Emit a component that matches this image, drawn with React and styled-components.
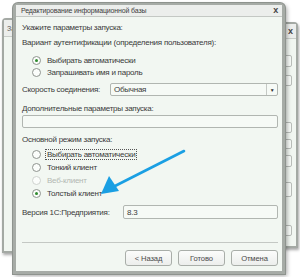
import React from "react";
import styled, { createGlobalStyle } from "styled-components";

const GlobalStyle = createGlobalStyle`
  html, body {
    margin: 0;
    padding: 0;
    background: #ffffff;
  }
  body {
    font-family: "Liberation Sans", Arial, sans-serif;
  }
`;

const Desktop = styled.div`
  position: relative;
  width: 300px;
  height: 277px;
  overflow: hidden;
  background: #ffffff;
`;

/* windows lying behind the dialog */
const BackWindow = styled.div`
  position: absolute;
  left: ${(p) => p.$left}px;
  top: ${(p) => p.$top}px;
  width: ${(p) => p.$width}px;
  height: ${(p) => p.$height}px;
  display: flex;
  flex-direction: column;
  border: 2px solid #a4a9a4;
  border-radius: 4px 4px 0 0;
  background: #f1f6f1;
  box-shadow: 1px 2px 3px rgba(0, 0, 0, 0.35);
  box-sizing: border-box;
`;

const BackTitle = styled.div`
  height: ${(p) => p.$h}px;
  display: flex;
  align-items: center;
  justify-content: ${(p) => (p.$end ? "flex-end" : "flex-start")};
  padding: 0 3px;
  background: #eceeec;
  border-bottom: 1px solid #c9cdc9;
  font-size: 7px;
  color: #555;
`;

const BackBody = styled.div`
  flex: 1;
  display: flex;
  flex-direction: column;
  align-items: flex-end;
  padding: ${(p) => p.$pad || "0"};
`;

const InnerPane = styled.div`
  flex: 1;
  margin: 16px 0 20px 8px;
  align-self: stretch;
  border-left: 1px solid #d4d8d4;
`;

const StubField = styled.div`
  width: 10px;
  height: ${(p) => p.$h}px;
  margin-top: ${(p) => p.$mt}px;
  border: 1px solid #b9bdb9;
  border-radius: 2px;
  background: #f7faf7;
  box-sizing: border-box;
`;

const Dialog = styled.div`
  position: absolute;
  left: 13px;
  top: 3px;
  width: 272px;
  height: 271px;
  display: flex;
  flex-direction: column;
  box-sizing: border-box;
  border: 3px solid #a6aba6;
  border-top-width: 2px;
  border-radius: 5px 5px 0 0;
  background: #f2f7f2;
  box-shadow: 0 0 0 1px #8e938e, 2px 2px 4px rgba(0, 0, 0, 0.35);
`;

const TitleBar = styled.div`
  height: 11px;
  display: flex;
  align-items: center;
  justify-content: space-between;
  padding: 0 4px 0 5px;
  background: #eceeec;
  border-bottom: 1px solid #c4c8c4;
  font-size: 7px;
  letter-spacing: -0.15px;
  color: #3c3c3c;
`;

const Close = styled.span`
  font-size: 9px;
  font-weight: bold;
  color: #444;
  line-height: 1;
`;

const Body = styled.div`
  flex: 1;
  display: flex;
  flex-direction: column;
  padding: 6px 4px 0 6px;
  font-size: 8px;
  letter-spacing: -0.25px;
  color: #3a3a3a;
`;

const Label = styled.div`
  height: 10px;
  line-height: 10px;
  margin-top: ${(p) => p.$mt || 0}px;
  white-space: nowrap;
`;

const RadioRow = styled.div`
  height: ${(p) => p.$h || 12}px;
  margin-top: ${(p) => p.$mt || 0}px;
  display: flex;
  align-items: center;
  padding-left: 10px;
  color: ${(p) => (p.$disabled ? "#b2b7b2" : "#3a3a3a")};
  white-space: nowrap;
`;

const RadioCircle = styled.span`
  width: 9px;
  height: 9px;
  box-sizing: border-box;
  border-radius: 50%;
  border: 1px solid ${(p) => (p.$disabled ? "#cfd3cf" : "#8f948f")};
  background: #fbfdfb;
  display: flex;
  align-items: center;
  justify-content: center;
  margin-right: 4px;
  flex-shrink: 0;

  &::after {
    content: "";
    width: 3px;
    height: 3px;
    border-radius: 50%;
    background: ${(p) => (p.$checked ? "#2e8b2e" : "transparent")};
  }
`;

const RadioText = styled.span`
  padding: 0 1px;
  line-height: 9px;
  border: 1px dotted ${(p) => (p.$focused ? "#555" : "transparent")};
`;

const FieldRow = styled.div`
  display: flex;
  align-items: center;
  height: ${(p) => p.$h}px;
  margin-top: ${(p) => p.$mt || 0}px;
`;

const FieldLabel = styled.span`
  width: ${(p) => p.$w}px;
  flex-shrink: 0;
  white-space: nowrap;
`;

const Field = styled.div`
  flex: 1;
  align-self: stretch;
  display: flex;
  align-items: center;
  box-sizing: border-box;
  border: 1px solid #b1b6b1;
  border-radius: 2px;
  background: #f6faf6;
  padding-left: 3px;
  color: #3a3a3a;
`;

const SelectValue = styled.span`
  flex: 1;
`;

const DropButton = styled.span`
  width: 10px;
  align-self: stretch;
  border-left: 1px solid #c5c9c5;
  display: flex;
  align-items: center;
  justify-content: center;
  font-size: 5px;
  color: #333;
`;

const Separator = styled.div`
  height: 1px;
  margin-top: 23px;
  background: #c4c8c4;
`;

const ButtonBar = styled.div`
  display: flex;
  justify-content: flex-end;
  gap: 6px;
  margin-top: 7px;
`;

const Button = styled.div`
  width: 47px;
  height: 16px;
  box-sizing: border-box;
  display: flex;
  align-items: center;
  justify-content: center;
  border: 1px solid #a9aea9;
  border-radius: 3px;
  background: linear-gradient(#fbfcfb, #eceeec);
  color: #4a4a4a;
  font-size: 7.6px;
  letter-spacing: -0.1px;
`;

const ArrowLayer = styled.svg`
  position: absolute;
  left: 0;
  top: 0;
  width: 300px;
  height: 277px;
  pointer-events: none;
`;

const authOptions = [
  { text: "Выбирать автоматически", checked: true },
  { text: "Запрашивать имя и пароль" },
];

const modeOptions = [
  { text: "Выбирать автоматически", focused: true },
  { text: "Тонкий клиент" },
  { text: "Веб-клиент", disabled: true },
  { text: "Толстый клиент", checked: true },
];

const rightStubs = [
  { mt: 16, h: 12 },
  { mt: 8, h: 11 },
  { mt: 36, h: 11 },
  { mt: 6, h: 10 },
  { mt: 6, h: 12 },
  { mt: 15, h: 15 },
  { mt: 28, h: 11 },
];

export default function App() {
  return (
    <>
      <GlobalStyle />
      <Desktop>
        <BackWindow $left={2} $top={18} $width={60} $height={235}>
          <BackTitle $h={16}>За</BackTitle>
          <BackBody>
            <InnerPane />
          </BackBody>
        </BackWindow>

        <BackWindow $left={255} $top={22} $width={43} $height={226}>
          <BackTitle $h={14} $end>
            <Close>x</Close>
          </BackTitle>
          <BackBody $pad="0 4px 0 0">
            {rightStubs.map((s, i) => (
              <StubField key={i} $mt={s.mt} $h={s.h} />
            ))}
          </BackBody>
        </BackWindow>

        <Dialog>
          <TitleBar>
            <span>Редактирование информационной базы</span>
            <Close>x</Close>
          </TitleBar>
          <Body>
            <Label>Укажите параметры запуска:</Label>
            <Label $mt={5}>Вариант аутентификации (определения пользователя):</Label>
            {authOptions.map((o, i) => (
              <RadioRow key={o.text} $mt={i === 0 ? 6 : 0}>
                <RadioCircle $checked={o.checked} />
                <RadioText>{o.text}</RadioText>
              </RadioRow>
            ))}

            <FieldRow $h={13} $mt={5}>
              <FieldLabel $w={88}>Скорость соединения:</FieldLabel>
              <Field>
                <SelectValue>Обычная</SelectValue>
                <DropButton>▼</DropButton>
              </Field>
            </FieldRow>

            <Label $mt={8}>Дополнительные параметры запуска:</Label>
            <FieldRow $h={13} $mt={1}>
              <Field />
            </FieldRow>

            <Label $mt={7}>Основной режим запуска:</Label>
            {modeOptions.map((o, i) => (
              <RadioRow key={o.text} $h={13} $mt={i === 0 ? 3 : 0} $disabled={o.disabled}>
                <RadioCircle $checked={o.checked} $disabled={o.disabled} />
                <RadioText $focused={o.focused}>{o.text}</RadioText>
              </RadioRow>
            ))}

            <FieldRow $h={14} $mt={5}>
              <FieldLabel $w={101}>Версия 1С:Предприятия:</FieldLabel>
              <Field>8.3</Field>
            </FieldRow>

            <Separator />
            <ButtonBar>
              <Button>&lt; Назад</Button>
              <Button>Готово</Button>
              <Button>Отмена</Button>
            </ButtonBar>
          </Body>
        </Dialog>

        <ArrowLayer viewBox="0 0 300 277">
          <line x1="184" y1="151" x2="113" y2="187" stroke="#1a9fe3" strokeWidth="2.6" strokeLinecap="round" />
          <polygon points="101,194 109,176 119,191" fill="#1a9fe3" />
        </ArrowLayer>
      </Desktop>
    </>
  );
}
